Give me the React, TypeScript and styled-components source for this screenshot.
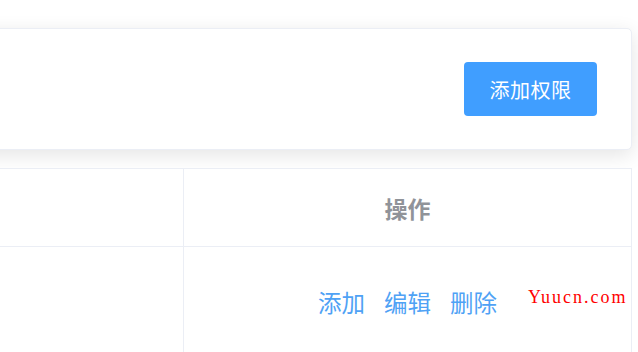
import React from "react";
import styled, { createGlobalStyle } from "styled-components";

const GlobalStyle = createGlobalStyle`
  html, body {
    margin: 0;
    padding: 0;
    background: #ffffff;
    overflow: hidden;
  }
  body {
    font-family: "Noto Sans CJK SC", "Noto Sans", sans-serif;
  }
`;

const Page = styled.div`
  width: 932px;
  margin-left: -300px;
  padding-top: 28px;
  display: flex;
  flex-direction: column;
  gap: 18px;
`;

const Card = styled.div`
  height: 122px;
  box-sizing: border-box;
  background: #ffffff;
  border: 1px solid #ebeef5;
  border-radius: 5px;
  box-shadow: 0 5px 20px 0 rgba(0, 0, 0, 0.11);
  display: flex;
  align-items: center;
  justify-content: flex-end;
  padding-right: 34px;
`;

const PrimaryButton = styled.button`
  width: 133px;
  height: 54px;
  border: none;
  border-radius: 4px;
  background: #409eff;
  color: #ffffff;
  font-family: "Noto Sans CJK SC", sans-serif;
  font-size: 20px;
  letter-spacing: 0.5px;
  cursor: pointer;
`;

const Table = styled.div`
  display: grid;
  grid-template-columns: 1fr 448px;
  border-top: 1px solid #ebeef5;
  border-left: 1px solid #ebeef5;
  background: #ffffff;
`;

const Cell = styled.div<{ $header?: boolean }>`
  position: relative;
  box-sizing: border-box;
  height: ${(p) => (p.$header ? "78px" : "110px")};
  border-right: 1px solid #ebeef5;
  border-bottom: 1px solid #ebeef5;
  display: flex;
  align-items: center;
  justify-content: center;
`;

const HeaderText = styled.span`
  font-size: 23px;
  font-weight: 700;
  color: #909399;
`;

const Actions = styled.div`
  display: flex;
  align-items: center;
  gap: 19px;
`;

const LinkButton = styled.span`
  font-size: 23.5px;
  color: #4fa2f5;
  cursor: pointer;
`;

const Watermark = styled.span`
  position: absolute;
  left: 344px;
  top: 41px;
  font-family: "Liberation Serif", serif;
  font-size: 18px;
  line-height: 18px;
  letter-spacing: 2px;
  color: #ff0000;
`;

export default function App() {
  return (
    <>
      <GlobalStyle />
      <Page>
        <Card>
          <PrimaryButton>添加权限</PrimaryButton>
        </Card>
        <Table>
          <Cell $header />
          <Cell $header>
            <HeaderText>操作</HeaderText>
          </Cell>
          <Cell />
          <Cell>
            <Actions>
              <LinkButton>添加</LinkButton>
              <LinkButton>编辑</LinkButton>
              <LinkButton>删除</LinkButton>
            </Actions>
            <Watermark>Yuucn.com</Watermark>
          </Cell>
        </Table>
      </Page>
    </>
  );
}
